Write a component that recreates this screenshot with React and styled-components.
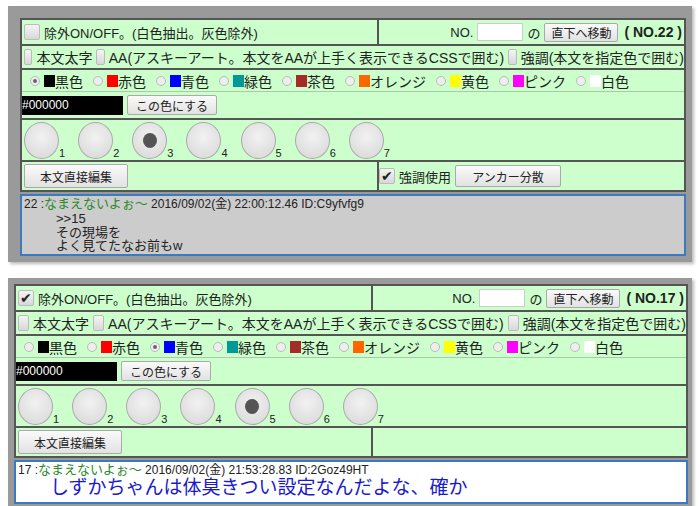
import React from "react";
import styled, { createGlobalStyle } from "styled-components";

const GlobalStyle = createGlobalStyle`
  html, body { margin: 0; padding: 0; background: #fff; }
  body { font-family: "Liberation Sans", "Noto Sans CJK JP", sans-serif; color: #222; }
  * { box-sizing: border-box; }
`;

const Page = styled.div`
  width: 700px;
  height: 506px;
  padding: 6px 8px 0 8px;
  display: flex;
  flex-direction: column;
  gap: 16px;
`;

const Panel = styled.div`
  background: #9a9a9a;
  padding: ${({ $pad }) => $pad};
  box-shadow: 2px 2px 3px #bbb;
  display: flex;
  flex-direction: column;
  gap: 2px;
`;

const Table = styled.div`
  background: #ccffcc;
  border: 2px solid #555;
  display: flex;
  flex-direction: column;
`;

const Row = styled.div`
  height: ${({ $h }) => $h}px;
  display: flex;
  align-items: center;
  border-top: ${({ $first, $light }) => ($first ? "none" : $light ? "1px solid #aac8aa" : "2px solid #555")};
  font-size: ${({ $fs }) => $fs || 13}px;
  padding-left: 2px;
  gap: 4px;
  white-space: nowrap;
`;

const Cell = styled.div`
  height: 100%;
  display: flex;
  align-items: center;
  gap: 4px;
  width: ${({ $w }) => $w || "auto"};
  flex: ${({ $grow }) => ($grow ? 1 : "none")};
  justify-content: ${({ $right }) => ($right ? "flex-end" : "flex-start")};
  border-left: ${({ $split }) => ($split ? "2px solid #555" : "none")};
  padding-right: ${({ $right }) => ($right ? "2px" : 0)};
`;

const Box = styled.span`
  width: 16px;
  height: 16px;
  border: 1px solid #bbb;
  border-radius: 2px;
  background: linear-gradient(#f4f4f4, #d8d8d8);
  display: inline-flex;
  align-items: center;
  justify-content: center;
  font-size: 14px;
  color: #222;
  line-height: 1;
`;

const Radio = styled.span`
  width: 10px;
  height: 10px;
  border-radius: 50%;
  border: 1px solid #bbb;
  background: #eee;
  display: inline-flex;
  align-items: center;
  justify-content: center;
  margin: 0 2px 0 6px;
  &::after {
    content: "";
    width: 4px;
    height: 4px;
    border-radius: 50%;
    background: ${({ $on }) => ($on ? "#666" : "transparent")};
  }
`;

const Swatch = styled.span`
  width: 11px;
  height: 12px;
  background: ${({ $c }) => $c};
  display: inline-block;
  margin-left: 2px;
`;

const ColorItem = styled.span`
  display: inline-flex;
  align-items: center;
  font-size: 14px;
`;

const Button = styled.button`
  font-family: inherit;
  font-size: 12px;
  height: ${({ $h }) => $h || 20}px;
  padding: 0 ${({ $px }) => $px || 8}px;
  width: ${({ $w }) => ($w ? $w + "px" : "auto")};
  border: 1px solid #aaa;
  border-radius: 2px;
  background: linear-gradient(#fafafa, #e2e2e2);
  color: #222;
`;

const NumInput = styled.span`
  display: inline-block;
  width: 46px;
  height: 18px;
  background: #fff;
  border: 1px solid #ccc;
`;

const HexInput = styled.span`
  display: inline-flex;
  align-items: center;
  width: 101px;
  height: 19px;
  background: #000;
  color: #fff;
  font-size: 12px;
  margin-left: -2px;
`;

const Dial = styled.span`
  display: inline-flex;
  align-items: flex-end;
  font-size: 11px;
  margin-right: 9px;
`;

const Knob = styled.span`
  width: 35px;
  height: 37px;
  border-radius: 50%;
  border: 1px solid #aaa;
  background: radial-gradient(circle at 50% 40%, #f2f2f2, #d6d6d6);
  display: inline-flex;
  align-items: center;
  justify-content: center;
  &::after {
    content: "";
    width: 14px;
    height: 15px;
    border-radius: 50%;
    background: ${({ $on }) => ($on ? "#555" : "transparent")};
  }
`;

const Bold = styled.b`
  font-size: 14px;
  margin-left: 2px;
`;

const Post = styled.div`
  background: ${({ $bg }) => $bg};
  border: 2px solid #3b7ac0;
  padding: 1px 2px 2px;
  font-size: 12px;
  height: ${({ $h }) => $h}px;
  line-height: 1.15;
  overflow: hidden;
`;

const Name = styled.span`
  color: #2a8a2a;
  font-size: 13px;
`;

const Body = styled.div`
  padding-left: ${({ $pl }) => $pl}px;
  font-size: ${({ $fs }) => $fs}px;
  color: ${({ $c }) => $c};
  line-height: ${({ $lh }) => $lh};
`;

const COLORS = [
  ["黒色", "#000"], ["赤色", "#f00"], ["青色", "#00f"], ["緑色", "#099"], ["茶色", "#a52a2a"],
  ["オレンジ", "#f60"], ["黄色", "#ff0"], ["ピンク", "#f0f"], ["白色", "#fff"],
];

function Controls({ exclude, no, color, knob, emphasis, split }) {
  return (
    <Table>
      <Row $h={24} $first>
        <Cell $w={split}><Box>{exclude ? "✔" : ""}</Box>除外ON/OFF。(白色抽出。灰色除外)</Cell>
        <Cell $grow $split $right>
          NO.<NumInput />の<Button $h={19} $px={6}>直下へ移動</Button><Bold>( NO.{no} )</Bold>
        </Cell>
      </Row>
      <Row $h={24} $fs={14}>
        <Box />本文太字 <Box />AA(アスキーアート。本文をAAが上手く表示できるCSSで囲む) <Box />強調(本文を指定色で囲む)
      </Row>
      <Row $h={23}>
        {COLORS.map(([n, c], i) => (
          <ColorItem key={n}><Radio $on={i === color} /><Swatch $c={c} />{n}</ColorItem>
        ))}
      </Row>
      <Row $h={27} $light>
        <HexInput>#000000</HexInput><Button $h={20}>この色にする</Button>
      </Row>
      <Row $h={42}>
        {[1, 2, 3, 4, 5, 6, 7].map((n) => (
          <Dial key={n}><Knob $on={n === knob} />{n}</Dial>
        ))}
      </Row>
      <Row $h={30}>
        <Cell $w={split}><Button $h={24} $w={104}>本文直接編集</Button></Cell>
        <Cell $grow $split>
          {emphasis && (<><Box>✔</Box>強調使用<Button $h={22} $w={106}>アンカー分散</Button></>)}
        </Cell>
      </Row>
    </Table>
  );
}

export default function App() {
  return (
    <>
      <GlobalStyle />
      <Page>
        <Panel $pad="12px 6px 6px 12px">
          <Controls no={22} color={0} knob={3} emphasis split="349px" />
          <Post $bg="#cccccc" $h={62}>
            22 :<Name>なまえないよぉ～</Name> 2016/09/02(金) 22:00:12.46 ID:C9yfvfg9
            <Body $pl={32} $fs={13} $c="#222" $lh={1.05}>
              &gt;&gt;15<br />その現場を<br />よく見てたなお前もw
            </Body>
          </Post>
        </Panel>
        <Panel $pad="6px 4px 4px 6px">
          <Controls exclude no={17} color={2} knob={5} split="349px" />
          <Post $bg="#fff" $h={44}>
            17 :<Name>なまえないよぉ～</Name> 2016/09/02(金) 21:53:28.83 ID:2Goz49HT
            <Body $pl={32} $fs={19} $c="#1a1acc" $lh={1.1}>
              しずかちゃんは体臭きつい設定なんだよな、確か
            </Body>
          </Post>
        </Panel>
      </Page>
    </>
  );
}
